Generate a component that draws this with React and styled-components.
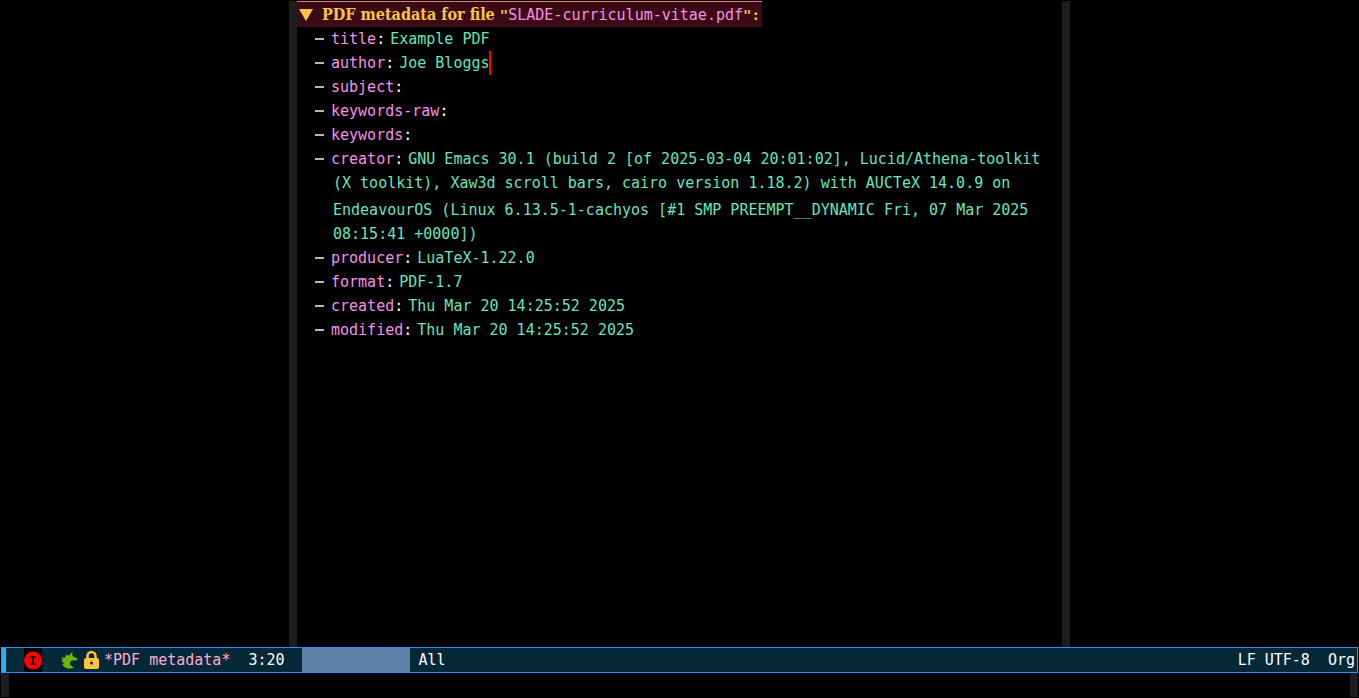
import React from 'react';
import styled, { createGlobalStyle } from 'styled-components';

const Global = createGlobalStyle`
  * { box-sizing: border-box; }
  body {
    margin: 0;
    background: #000;
    color: #fff;
    font: 15px/24px "DejaVu Sans Mono", monospace;
  }
`;

const Frame = styled.div`
  display: flex;
  flex-direction: column;
  min-height: 100vh;
  padding: 1px;
`;

const Window = styled.main`
  flex: 1;
  display: flex;
  width: 100%;
  max-width: 781px;
  margin: 0 auto;
`;

const Fringe = styled.div`
  flex: none;
  width: 8px;
  background: #1e1e1e;
`;

const Buffer = styled.section`
  flex: 1;
  min-width: 0;
`;

const Heading = styled.h1`
  display: flex;
  align-items: center;
  width: fit-content;
  height: 26px;
  margin: 0;
  padding: 0 2px;
  border-top: 1px solid #e8776a;
  background: #3a0b14;
  color: #fec43f;
  font: bold 16px/24px "DejaVu Serif Condensed", "DejaVu Serif", serif;
  white-space: pre;
`;

const Fold = styled.svg`
  width: 14px;
  height: 12px;
  margin-right: 9px;
`;

const Punct = styled.span`
  font: bold 14px/24px "DejaVu Sans Mono", monospace;
`;

const FileName = styled.span`
  color: #f78fe7;
  font: 15px/24px "DejaVu Sans Mono", monospace;
`;

const List = styled.ul`
  list-style: none;
  margin: 0;
  padding: 0 20px 0 18px;
`;

const Item = styled.li`
  display: flex;
`;

const Dash = styled.span`
  flex: none;
  width: 9px;
  height: 2px;
  margin: 11px 7px 0 0;
  background: #b8b8b8;
`;

const Body = styled.div`
  padding-left: 2px;
  text-indent: -2px;
`;

const Key = styled.span`
  color: #f78fe7;
`;

const Value = styled.span`
  margin-left: 5px;
  color: #6ae4b9;
`;

const Strut = styled.span`
  display: inline-block;
  height: 20px;
`;

const Cursor = styled.span`
  display: inline-block;
  width: 2px;
  height: 24px;
  margin-left: -1px;
  vertical-align: top;
  background: #f00;
`;

const ModeLine = styled.footer`
  display: flex;
  align-items: center;
  height: 26px;
  border: 1px solid #2f8fff;
  background: #042837;
  white-space: pre;
`;

const Edge = styled.div`
  width: 4px;
  height: 24px;
  background: #2fafff;
`;

const State = styled.svg`
  width: 18px;
  height: 24px;
  margin: 0 18px;
  background: #000;
`;

const Icon = styled.svg`
  width: 18px;
  height: 20px;
  margin-right: 4px;
`;

const BufferName = styled.span`
  margin-right: 18px;
  color: #feacd0;
`;

const Progress = styled.div`
  width: 108px;
  height: 24px;
  margin: 0 9px 0 17px;
  background: #5c82a8;
`;

const Right = styled.div`
  display: flex;
  gap: 18px;
  margin-left: auto;
  padding-right: 2px;
`;

const EchoArea = styled.div`
  display: flex;
  justify-content: space-between;
  height: 24px;
`;

const metadata = [
  { key: 'title', value: 'Example PDF' },
  { key: 'author', value: 'Joe Bloggs', cursor: true },
  { key: 'subject' },
  { key: 'keywords-raw' },
  { key: 'keywords' },
  {
    key: 'creator',
    value: (
      <>
        GNU Emacs 30.1 (build 2 [of 2025-03-04 20:01:02], Lucid/Athena-toolkit
        (X toolkit), Xaw3d scroll bars, cairo version 1.18.2) with AUCTeX
        14.0.9 on EndeavourOS (Linux 6.13.5-1-cachyos [#1 SMP{' '}
        <Strut />PREEMPT__DYNAMIC Fri, 07 Mar 2025 08:15:41 +0000])
      </>
    ),
  },
  { key: 'producer', value: 'LuaTeX-1.22.0' },
  { key: 'format', value: 'PDF-1.7' },
  { key: 'created', value: 'Thu Mar 20 14:25:52 2025' },
  { key: 'modified', value: 'Thu Mar 20 14:25:52 2025' },
];

export default function App() {
  return (
    <Frame>
      <Global />
      <Window>
        <Fringe />
        <Buffer>
          <Heading>
            <Fold viewBox="0 0 14 12"><path d="M0 0h14L7 12z" fill="#fec43f" /></Fold>
            <span>
              PDF metadata for file <Punct>"</Punct>
              <FileName>SLADE-curriculum-vitae.pdf</FileName>
              <Punct>":</Punct>
            </span>
          </Heading>
          <List>
            {metadata.map((m) => (
              <Item key={m.key}>
                <Dash />
                <Body>
                  <Key>{m.key}</Key>:
                  {m.value && <Value>{m.value}</Value>}
                  {m.cursor && <Cursor />}
                </Body>
              </Item>
            ))}
          </List>
        </Buffer>
        <Fringe />
      </Window>
      <ModeLine>
        <Edge />
        <State viewBox="0 0 18 24">
          <circle cx="9" cy="12.500" r="9" fill="#f00" />
          <path d="M6.500 8h5v1.500h-1.500v6h1.500v1.500h-5v-1.500H8v-6H6.500z" fill="#100" />
        </State>
        <Icon viewBox="0 0 18 20">
          <path
            d="M12.500 1.500L12.300 5.500L14 7L17.500 8.500L16.500 10.500L12 10.500L9.800 12.500L10.500 15L14 18L8.500 18.800L4 17L2 13.500L4.500 14L1 10L3 10.500L1.500 7L4.500 8L6 5L9 5.500z"
            fill="#6cb60a"
          />
        </Icon>
        <Icon viewBox="0 0 18 20">
          <path d="M5.500 9V6a4 4 0 0 1 8 0v3" fill="none" stroke="#fec43f" strokeWidth="2.500" />
          <rect x="2" y="8" width="15" height="11" rx="2" fill="#fec43f" />
          <circle cx="9.500" cy="13" r="1.500" fill="#042837" />
        </Icon>
        <BufferName>*PDF metadata*</BufferName>
        <span>3:20</span>
        <Progress />
        <span>All</span>
        <Right>
          <span>LF UTF-8</span>
          <span>Org</span>
        </Right>
      </ModeLine>
      <EchoArea>
        <Fringe />
        <Fringe />
      </EchoArea>
    </Frame>
  );
}
